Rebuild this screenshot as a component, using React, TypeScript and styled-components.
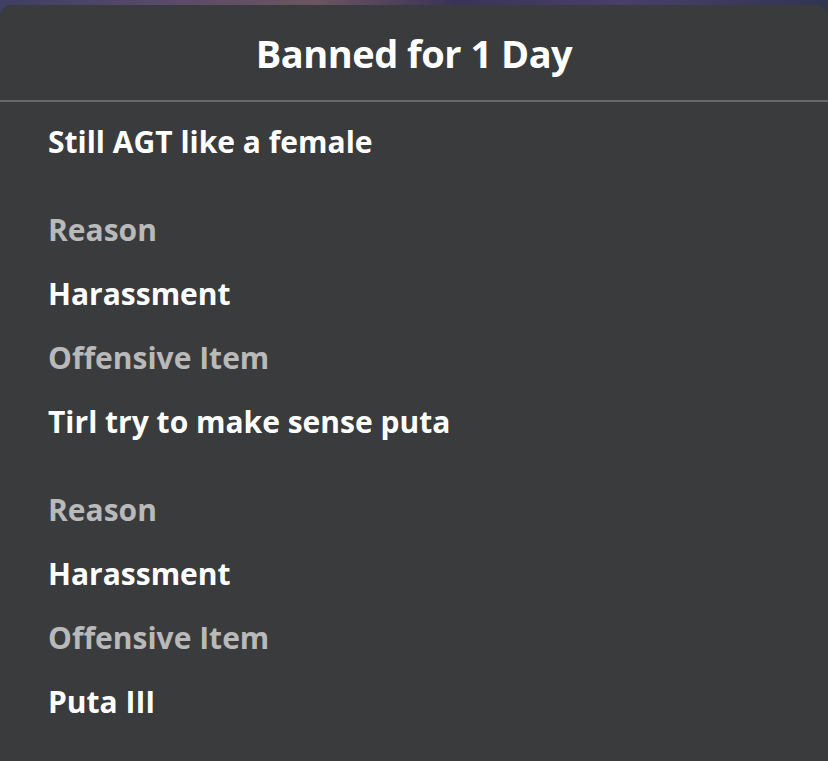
import React from 'react'
import styled, { createGlobalStyle } from 'styled-components'

const GlobalStyle = createGlobalStyle`
  html, body {
    margin: 0;
    padding: 0;
    background: #2a2640;
    overflow: hidden;
  }
  body {
    font-family: 'Open Sans', sans-serif;
  }
`

const Screen = styled.div`
  width: 828px;
  height: 761px;
  display: flex;
  flex-direction: column;
  background: linear-gradient(90deg, #3c3f63 0%, #5a4a6a 20%, #6b5560 38%, #3a3358 55%, #4a3f6a 75%, #2f3550 100%);
  overflow: hidden;
`

const Backdrop = styled.div`
  height: 5px;
  flex-shrink: 0;
`

const Sheet = styled.div`
  flex: 1;
  background: #393b3d;
  border-radius: 12px 12px 0 0;
  display: flex;
  flex-direction: column;
`

const Header = styled.div`
  height: 95px;
  display: flex;
  align-items: center;
  justify-content: center;
  border-bottom: 2px solid #67686a;
`

const Title = styled.h1`
  margin: 0;
  font-family: 'Open Sans', sans-serif;
  font-weight: 700;
  font-size: 38px;
  color: #ffffff;
  letter-spacing: -0.5px;
`

const Body = styled.div`
  padding: 7px 48px 0;
  display: flex;
  flex-direction: column;
  gap: 24px;
`

const Group = styled.div`
  display: flex;
  flex-direction: column;
`

const Line = styled.div<{ $muted?: boolean }>`
  height: 64px;
  display: flex;
  align-items: center;
  font-family: 'Open Sans', sans-serif;
  font-weight: 700;
  font-size: 30px;
  color: ${(p) => (p.$muted ? '#b9b9ba' : '#ffffff')};
  white-space: nowrap;
`

const entries = [
  { reason: 'Harassment', item: 'Tirl try to make sense puta' },
  { reason: 'Harassment', item: 'Puta III' },
]

export default function App() {
  return (
    <Screen>
      <GlobalStyle />
      <Backdrop />
      <Sheet>
        <Header>
          <Title>Banned for 1 Day</Title>
        </Header>
        <Body>
          <Group>
            <Line>Still AGT like a female</Line>
          </Group>
          {entries.map((e, i) => (
            <Group key={i}>
              <Line $muted>Reason</Line>
              <Line>{e.reason}</Line>
              <Line $muted>Offensive Item</Line>
              <Line>{e.item}</Line>
            </Group>
          ))}
        </Body>
      </Sheet>
    </Screen>
  )
}
